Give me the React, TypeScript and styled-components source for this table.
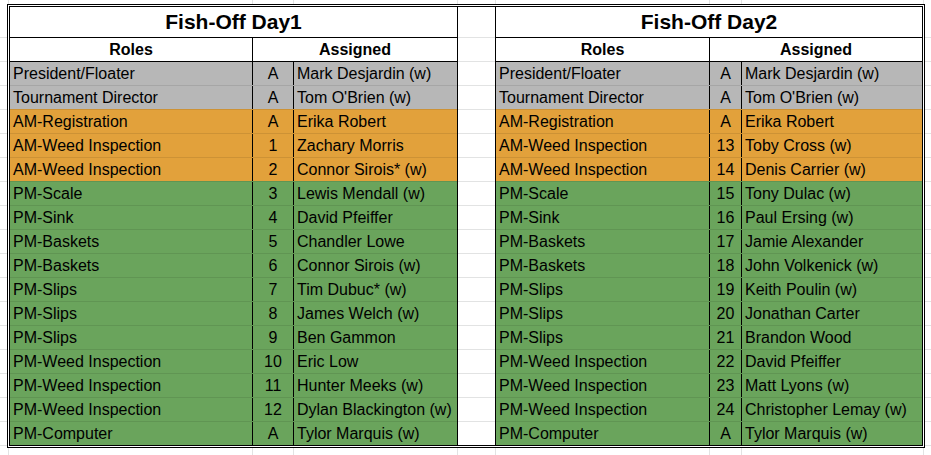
import React from "react";
import styled, { createGlobalStyle } from "styled-components";

const GlobalStyle = createGlobalStyle`
  html, body { margin: 0; padding: 0; background: #fff; }
  body { font-family: "Liberation Sans", Arial, sans-serif; color: #000; }
`;

const GRID = "#e2e3e3";
const COLS_X = [8, 252, 293, 457, 495, 709, 741, 923];

const FILL = {
  grey: "#b7b7b7",
  orange: "#e2a13b",
  green: "#6aa45c",
} as const;

type Fill = keyof typeof FILL;

type Entry = { role: string; no: string; name: string; fill: Fill };

const Page = styled.div`
  width: 931px;
  height: 455px;
  box-sizing: border-box;
  padding: 4px 0 0 7px;
  overflow: hidden;
  background-color: #fff;
  background-image: ${COLS_X.map(() => `linear-gradient(${GRID}, ${GRID})`).join(", ")},
    repeating-linear-gradient(to bottom, transparent 0 23px, ${GRID} 23px 24px);
  background-size: ${COLS_X.map(() => "1px 100%").join(", ")}, 100% 441px;
  background-position: ${COLS_X.map((x) => `${x}px 0`).join(", ")}, 0 14px;
  background-repeat: no-repeat;
`;

const Frame = styled.div`
  display: flex;
  width: 918px;
  box-sizing: border-box;
  border: 3px double #000;
  background: #fff;
`;

const Table = styled.div<{ $side: "left" | "right" }>`
  display: flex;
  flex-direction: column;
  flex: none;
  box-sizing: border-box;
  width: ${(p) => (p.$side === "left" ? 448 : 427)}px;
  ${(p) => (p.$side === "left" ? "border-right: 1px solid #000;" : "border-left: 1px solid #000;")}
`;

const Title = styled.div`
  height: 30px;
  line-height: 30px;
  text-align: center;
  font-weight: 700;
  font-size: 21px;
  white-space: nowrap;
`;

const HeaderRow = styled.div<{ $c1: number }>`
  display: grid;
  grid-template-columns: ${(p) => p.$c1}px 1fr;
  height: 24px;
  box-sizing: border-box;
  border-top: 1px solid #000;
  background: #fff;
`;

const HeaderCell = styled.div<{ $divider?: boolean }>`
  font-weight: 700;
  font-size: 16px;
  line-height: 23px;
  text-align: center;
  white-space: nowrap;
  box-sizing: border-box;
  ${(p) => (p.$divider ? "border-right: 1px solid #000;" : "")}
`;

const DataRow = styled.div<{ $c1: number; $c2: number; $fill: Fill; $first?: boolean }>`
  display: grid;
  grid-template-columns: ${(p) => p.$c1}px ${(p) => p.$c2}px 1fr;
  height: 24px;
  box-sizing: border-box;
  border-top: 1px solid ${(p) => (p.$first ? "#000" : "rgba(0, 0, 0, 0.09)")};
  background: ${(p) => FILL[p.$fill]};
`;

const Cell = styled.div<{ $center?: boolean; $divider?: boolean }>`
  font-size: 16px;
  line-height: 23px;
  padding: 0 3px;
  white-space: nowrap;
  overflow: hidden;
  box-sizing: border-box;
  text-align: ${(p) => (p.$center ? "center" : "left")};
  ${(p) => (p.$divider ? "border-right: 1px solid #000;" : "")}
`;

const Gap = styled.div`
  display: flex;
  flex-direction: column;
  flex: none;
  width: 37px;
  background: #fff;
`;

const GapTitle = styled.div`
  height: 30px;
`;

const GapCell = styled.div`
  height: 24px;
  box-sizing: border-box;
  border-top: 1px solid ${GRID};
`;

const day1: Entry[] = [
  { role: "President/Floater", no: "A", name: "Mark Desjardin (w)", fill: "grey" },
  { role: "Tournament Director", no: "A", name: "Tom O'Brien (w)", fill: "grey" },
  { role: "AM-Registration", no: "A", name: "Erika Robert", fill: "orange" },
  { role: "AM-Weed Inspection", no: "1", name: "Zachary Morris", fill: "orange" },
  { role: "AM-Weed Inspection", no: "2", name: "Connor Sirois* (w)", fill: "orange" },
  { role: "PM-Scale", no: "3", name: "Lewis Mendall (w)", fill: "green" },
  { role: "PM-Sink", no: "4", name: "David Pfeiffer", fill: "green" },
  { role: "PM-Baskets", no: "5", name: "Chandler Lowe", fill: "green" },
  { role: "PM-Baskets", no: "6", name: "Connor Sirois (w)", fill: "green" },
  { role: "PM-Slips", no: "7", name: "Tim Dubuc* (w)", fill: "green" },
  { role: "PM-Slips", no: "8", name: "James Welch (w)", fill: "green" },
  { role: "PM-Slips", no: "9", name: "Ben Gammon", fill: "green" },
  { role: "PM-Weed Inspection", no: "10", name: "Eric Low", fill: "green" },
  { role: "PM-Weed Inspection", no: "11", name: "Hunter Meeks (w)", fill: "green" },
  { role: "PM-Weed Inspection", no: "12", name: "Dylan Blackington (w)", fill: "green" },
  { role: "PM-Computer", no: "A", name: "Tylor Marquis (w)", fill: "green" },
];

const day2: Entry[] = [
  { role: "President/Floater", no: "A", name: "Mark Desjardin (w)", fill: "grey" },
  { role: "Tournament Director", no: "A", name: "Tom O'Brien (w)", fill: "grey" },
  { role: "AM-Registration", no: "A", name: "Erika Robert", fill: "orange" },
  { role: "AM-Weed Inspection", no: "13", name: "Toby Cross (w)", fill: "orange" },
  { role: "AM-Weed Inspection", no: "14", name: "Denis Carrier (w)", fill: "orange" },
  { role: "PM-Scale", no: "15", name: "Tony Dulac (w)", fill: "green" },
  { role: "PM-Sink", no: "16", name: "Paul Ersing (w)", fill: "green" },
  { role: "PM-Baskets", no: "17", name: "Jamie Alexander", fill: "green" },
  { role: "PM-Baskets", no: "18", name: "John Volkenick (w)", fill: "green" },
  { role: "PM-Slips", no: "19", name: "Keith Poulin (w)", fill: "green" },
  { role: "PM-Slips", no: "20", name: "Jonathan Carter", fill: "green" },
  { role: "PM-Slips", no: "21", name: "Brandon Wood", fill: "green" },
  { role: "PM-Weed Inspection", no: "22", name: "David Pfeiffer", fill: "green" },
  { role: "PM-Weed Inspection", no: "23", name: "Matt Lyons (w)", fill: "green" },
  { role: "PM-Weed Inspection", no: "24", name: "Christopher Lemay (w)", fill: "green" },
  { role: "PM-Computer", no: "A", name: "Tylor Marquis (w)", fill: "green" },
];

function DayTable({
  title,
  rows,
  side,
  c1,
  c2,
}: {
  title: string;
  rows: Entry[];
  side: "left" | "right";
  c1: number;
  c2: number;
}) {
  return (
    <Table $side={side}>
      <Title>{title}</Title>
      <HeaderRow $c1={c1}>
        <HeaderCell $divider>Roles</HeaderCell>
        <HeaderCell>Assigned</HeaderCell>
      </HeaderRow>
      {rows.map((r, i) => (
        <DataRow key={i} $c1={c1} $c2={c2} $fill={r.fill} $first={i === 0}>
          <Cell $divider>{r.role}</Cell>
          <Cell $divider $center>
            {r.no}
          </Cell>
          <Cell>{r.name}</Cell>
        </DataRow>
      ))}
    </Table>
  );
}

export default function App() {
  return (
    <>
      <GlobalStyle />
      <Page>
        <Frame>
          <DayTable title="Fish-Off Day1" rows={day1} side="left" c1={243} c2={41} />
          <Gap>
            <GapTitle />
            {Array.from({ length: 17 }).map((_, i) => (
              <GapCell key={i} />
            ))}
          </Gap>
          <DayTable title="Fish-Off Day2" rows={day2} side="right" c1={214} c2={32} />
        </Frame>
      </Page>
    </>
  );
}
